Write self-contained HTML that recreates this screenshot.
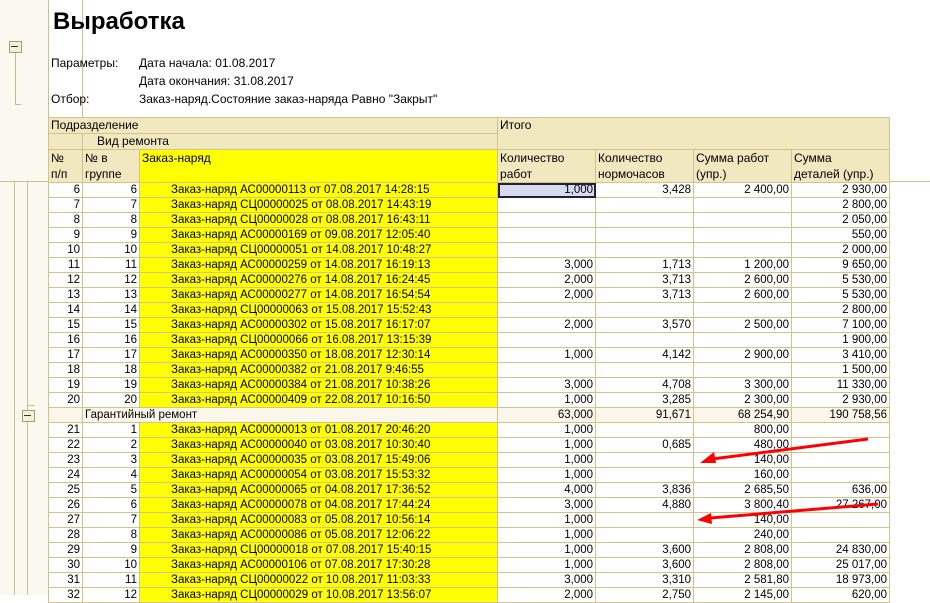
<!DOCTYPE html>
<html><head><meta charset="utf-8"><style>
body{margin:0;width:930px;height:595px;overflow:hidden;background:#fff;font-family:"Liberation Sans",Arial,sans-serif;font-size:12px;color:#000;position:relative}
.abs{position:absolute}
#strip{left:0;top:0;width:48px;height:595px;background:#fbf9ef;border-right:1px solid #cdbf8c}
table{position:absolute;left:48px;top:117px;border-collapse:collapse;table-layout:fixed;width:842px}
td{border:1px solid #d2c38c;padding:0 2px;height:14px;line-height:14px;white-space:nowrap;overflow:hidden;text-align:right;font-size:11.5px}
tr.h td{background:#f2e8c0;text-align:left;vertical-align:top;font-size:12px}
td.y{background:#ff0;text-align:left;padding-left:31px}
tr.g td{background:#faf7ea}
.sel{background:#d8daf0;outline:2px solid #223;outline-offset:-2px}
</style></head><body>
<div id="strip" class="abs"></div>
<div class="abs" style="left:14px;top:181px;width:1px;height:414px;background:#cdbf8c"></div>
<div class="abs" style="left:27px;top:181px;width:1px;height:414px;background:#cdbf8c"></div>
<div class="abs" style="left:15px;top:48px;width:1px;height:56px;background:#c8ba88"></div>
<div class="abs" style="left:15px;top:104px;width:6px;height:1px;background:#c8ba88"></div>
<div class="abs" style="left:9px;top:41px;width:11px;height:10px;border:1px solid #a89c6c;background:#f4f0dc"></div>
<div class="abs" style="left:11px;top:46px;width:7px;height:1px;background:#333"></div>
<div class="abs" style="left:27px;top:405px;width:8px;height:1px;background:#cdbf8c"></div>
<div class="abs" style="left:22px;top:410px;width:11px;height:10px;border:1px solid #a89c6c;background:#f4f0dc"></div>
<div class="abs" style="left:24px;top:415px;width:7px;height:1px;background:#333"></div>
<div class="abs" style="left:82px;top:0;width:1px;height:117px;background:#cdbf8c"></div>
<div class="abs" style="left:0;top:181px;width:930px;height:1px;background:#cdbf8c"></div>
<div class="abs" style="left:53px;top:8px;font-size:24px;font-weight:bold">Выработка</div>
<div class="abs" style="left:51px;top:54px;line-height:18px">Параметры:<br><br>Отбор:</div>
<div class="abs" style="left:139px;top:54px;line-height:18px">Дата начала: 01.08.2017<br>Дата окончания: 31.08.2017<br>Заказ-наряд.Состояние заказ-наряда Равно "Закрыт"</div>
<table>
<colgroup><col style="width:34px"><col style="width:57px"><col style="width:358px"><col style="width:98px"><col style="width:98px"><col style="width:98px"><col style="width:98px"></colgroup>
<tr class="h"><td colspan="3" style="height:15px">Подразделение</td><td colspan="4" rowspan="2">Итого</td></tr>
<tr class="h"><td style="height:15px"></td><td colspan="2" style="padding-left:14px">Вид ремонта</td></tr>
<tr class="h"><td style="height:32px;line-height:16px">№<br>п/п</td><td style="line-height:16px">№ в<br>группе</td><td style="background:#ff0;line-height:16px">Заказ-наряд</td><td style="line-height:16px">Количество<br>работ</td><td style="line-height:16px">Количество<br>нормочасов</td><td style="line-height:16px">Сумма работ<br>(упр.)</td><td style="line-height:16px">Сумма<br>деталей (упр.)</td></tr>
<tr><td>6</td><td>6</td><td class="y">Заказ-наряд АС00000113 от 07.08.2017 14:28:15</td><td class="sel">1,000</td><td>3,428</td><td>2 400,00</td><td>2 930,00</td></tr>
<tr><td>7</td><td>7</td><td class="y">Заказ-наряд СЦ00000025 от 08.08.2017 14:43:19</td><td></td><td></td><td></td><td>2 800,00</td></tr>
<tr><td>8</td><td>8</td><td class="y">Заказ-наряд СЦ00000028 от 08.08.2017 16:43:11</td><td></td><td></td><td></td><td>2 050,00</td></tr>
<tr><td>9</td><td>9</td><td class="y">Заказ-наряд АС00000169 от 09.08.2017 12:05:40</td><td></td><td></td><td></td><td>550,00</td></tr>
<tr><td>10</td><td>10</td><td class="y">Заказ-наряд СЦ00000051 от 14.08.2017 10:48:27</td><td></td><td></td><td></td><td>2 000,00</td></tr>
<tr><td>11</td><td>11</td><td class="y">Заказ-наряд АС00000259 от 14.08.2017 16:19:13</td><td>3,000</td><td>1,713</td><td>1 200,00</td><td>9 650,00</td></tr>
<tr><td>12</td><td>12</td><td class="y">Заказ-наряд АС00000276 от 14.08.2017 16:24:45</td><td>2,000</td><td>3,713</td><td>2 600,00</td><td>5 530,00</td></tr>
<tr><td>13</td><td>13</td><td class="y">Заказ-наряд АС00000277 от 14.08.2017 16:54:54</td><td>2,000</td><td>3,713</td><td>2 600,00</td><td>5 530,00</td></tr>
<tr><td>14</td><td>14</td><td class="y">Заказ-наряд СЦ00000063 от 15.08.2017 15:52:43</td><td></td><td></td><td></td><td>2 800,00</td></tr>
<tr><td>15</td><td>15</td><td class="y">Заказ-наряд АС00000302 от 15.08.2017 16:17:07</td><td>2,000</td><td>3,570</td><td>2 500,00</td><td>7 100,00</td></tr>
<tr><td>16</td><td>16</td><td class="y">Заказ-наряд СЦ00000066 от 16.08.2017 13:15:39</td><td></td><td></td><td></td><td>1 900,00</td></tr>
<tr><td>17</td><td>17</td><td class="y">Заказ-наряд АС00000350 от 18.08.2017 12:30:14</td><td>1,000</td><td>4,142</td><td>2 900,00</td><td>3 410,00</td></tr>
<tr><td>18</td><td>18</td><td class="y">Заказ-наряд АС00000382 от 21.08.2017 9:46:55</td><td></td><td></td><td></td><td>1 500,00</td></tr>
<tr><td>19</td><td>19</td><td class="y">Заказ-наряд АС00000384 от 21.08.2017 10:38:26</td><td>3,000</td><td>4,708</td><td>3 300,00</td><td>11 330,00</td></tr>
<tr><td>20</td><td>20</td><td class="y">Заказ-наряд АС00000409 от 22.08.2017 10:16:50</td><td>1,000</td><td>3,285</td><td>2 300,00</td><td>2 930,00</td></tr>
<tr class="g"><td></td><td colspan="2" style="text-align:left;padding-left:2px">Гарантийный ремонт</td><td>63,000</td><td>91,671</td><td>68 254,90</td><td>190 758,56</td></tr>
<tr><td>21</td><td>1</td><td class="y">Заказ-наряд АС00000013 от 01.08.2017 20:46:20</td><td>1,000</td><td></td><td>800,00</td><td></td></tr>
<tr><td>22</td><td>2</td><td class="y">Заказ-наряд АС00000040 от 03.08.2017 10:30:40</td><td>1,000</td><td>0,685</td><td>480,00</td><td></td></tr>
<tr><td>23</td><td>3</td><td class="y">Заказ-наряд АС00000035 от 03.08.2017 15:49:06</td><td>1,000</td><td></td><td>140,00</td><td></td></tr>
<tr><td>24</td><td>4</td><td class="y">Заказ-наряд АС00000054 от 03.08.2017 15:53:32</td><td>1,000</td><td></td><td>160,00</td><td></td></tr>
<tr><td>25</td><td>5</td><td class="y">Заказ-наряд АС00000065 от 04.08.2017 17:36:52</td><td>4,000</td><td>3,836</td><td>2 685,50</td><td>636,00</td></tr>
<tr><td>26</td><td>6</td><td class="y">Заказ-наряд АС00000078 от 04.08.2017 17:44:24</td><td>3,000</td><td>4,880</td><td>3 800,40</td><td>27 267,00</td></tr>
<tr><td>27</td><td>7</td><td class="y">Заказ-наряд АС00000083 от 05.08.2017 10:56:14</td><td>1,000</td><td></td><td>140,00</td><td></td></tr>
<tr><td>28</td><td>8</td><td class="y">Заказ-наряд АС00000086 от 05.08.2017 12:06:22</td><td>1,000</td><td></td><td>240,00</td><td></td></tr>
<tr><td>29</td><td>9</td><td class="y">Заказ-наряд СЦ00000018 от 07.08.2017 15:40:15</td><td>1,000</td><td>3,600</td><td>2 808,00</td><td>24 830,00</td></tr>
<tr><td>30</td><td>10</td><td class="y">Заказ-наряд АС00000106 от 07.08.2017 17:30:28</td><td>1,000</td><td>3,600</td><td>2 808,00</td><td>25 017,00</td></tr>
<tr><td>31</td><td>11</td><td class="y">Заказ-наряд СЦ00000022 от 10.08.2017 11:03:33</td><td>3,000</td><td>3,310</td><td>2 581,80</td><td>18 973,00</td></tr>
<tr><td>32</td><td>12</td><td class="y">Заказ-наряд СЦ00000029 от 10.08.2017 13:56:07</td><td>2,000</td><td>2,750</td><td>2 145,00</td><td>620,00</td></tr>
</table>
<svg class="abs" style="left:0;top:0" width="930" height="595">
<line x1="868" y1="439" x2="712" y2="459" stroke="#f00" stroke-width="3"/>
<polygon points="700,463 714,452 716,463" fill="#f00"/>
<line x1="878" y1="504" x2="710" y2="518" stroke="#f00" stroke-width="3"/>
<polygon points="697,520 711,513 712,524" fill="#f00"/>
</svg>
</body></html>
